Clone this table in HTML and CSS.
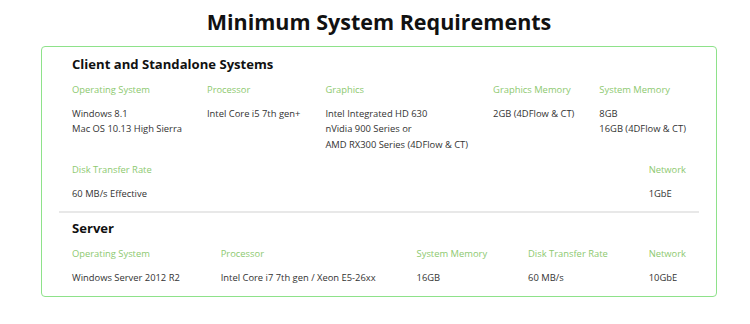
FILE: index.html
```html
<!DOCTYPE html>
<html lang="en">
<head>
<meta charset="UTF-8">
<title>Minimum System Requirements</title>
<link rel="stylesheet" href="styles.css">
</head>
<body>
<div class="wrap">
  <h1>Minimum System Requirements</h1>
  <div class="card">
    <div class="section">
      <h2>Client and Standalone Systems</h2>
      <div class="specs">
        <div class="spec"><div class="label">Operating System</div><div class="value">Windows 8.1<br>Mac OS 10.13 High Sierra</div></div>
        <div class="spec"><div class="label">Processor</div><div class="value">Intel Core i5 7th gen+</div></div>
        <div class="spec"><div class="label">Graphics</div><div class="value">Intel Integrated HD 630<br>nVidia 900 Series or<br>AMD RX300 Series (4DFlow &amp; CT)</div></div>
        <div class="spec"><div class="label">Graphics Memory</div><div class="value">2GB (4DFlow &amp; CT)</div></div>
        <div class="spec"><div class="label">System Memory</div><div class="value">8GB<br>16GB (4DFlow &amp; CT)</div></div>
      </div>
      <div class="specs">
        <div class="spec"><div class="label">Disk Transfer Rate</div><div class="value">60 MB/s Effective</div></div>
        <div class="spec"><div class="label">Network</div><div class="value">1GbE</div></div>
      </div>
    </div>
    <div class="section">
      <h2>Server</h2>
      <div class="specs">
        <div class="spec"><div class="label">Operating System</div><div class="value">Windows Server 2012 R2</div></div>
        <div class="spec"><div class="label">Processor</div><div class="value">Intel Core i7 7th gen / Xeon E5-26xx</div></div>
        <div class="spec"><div class="label">System Memory</div><div class="value">16GB</div></div>
        <div class="spec"><div class="label">Disk Transfer Rate</div><div class="value">60 MB/s</div></div>
        <div class="spec"><div class="label">Network</div><div class="value">10GbE</div></div>
      </div>
    </div>
  </div>
</div>
</body>
</html>
```

FILE: styles.css
```css
*{margin:0;padding:0;box-sizing:border-box}
body{background:#fff;font-family:'Open Sans',sans-serif;color:#333}
.wrap{width:676px;margin-left:41px}
h1{font-size:21.5px;font-weight:700;line-height:32px;padding-top:6px;margin-bottom:8px;text-align:center;color:#111}
.card{border:1px solid #8ee28a;border-radius:4px;padding:7px 17px 11px}
.section{padding:0 13px 10px}
.section+.section{border-top:2px solid #e8e8e8;padding-top:5px;padding-bottom:0}
h2{font-size:13.1px;font-weight:700;line-height:20px;color:#111}
.specs{display:flex;justify-content:space-between;margin-top:8px}
.specs+.specs{margin-top:10px}
.label{font-size:9.4px;line-height:16px;color:#8dc96f}
.value{font-size:9.4px;line-height:15.5px;margin-top:7.5px;color:#333}
```
